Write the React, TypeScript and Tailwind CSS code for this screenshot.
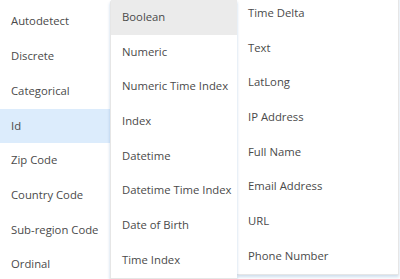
import React from "react";

const col1 = ["Autodetect", "Discrete", "Categorical", "Id", "Zip Code", "Country Code", "Sub-region Code", "Ordinal"];
const col2 = ["Boolean", "Numeric", "Numeric Time Index", "Index", "Datetime", "Datetime Time Index", "Date of Birth", "Time Index"];
const col3 = ["Time Delta", "Text", "LatLong", "IP Address", "Full Name", "Email Address", "URL", "Phone Number"];

function Menu({ items, active, activeClass, className }: {
    items: string[];
    active?: string;
    activeClass?: string;
    className: string;
}) {
    return <div className={`bg-white flex flex-col ${className}`}>
        {items.map(item => <div
            key={item}
            className={`${item === active ? activeClass : ""} h-[34.7px] flex items-center pl-[11px] text-[11.3px] text-[#4a4a4a] whitespace-nowrap cursor-pointer`}>
            {item}
        </div>)}
    </div>
}

export default function App() {
    return <div className="w-[400px] h-[279px] overflow-hidden bg-white font-['Open_Sans',sans-serif]">
        <div className="flex items-start">
            <Menu items={col1} active="Id" activeClass="bg-[#dcecfc]"
                className="w-[110px] pt-[4.6px] rounded-tl-[3px]" />
            <Menu items={col2} active="Boolean" activeClass="bg-[#ebebeb]"
                className="w-[127px] rounded-tl-[3px] border-l border-b border-[#e6e6e6] shadow-[0_2px_3px_rgba(0,80,160,0.25)] relative z-10" />
            <Menu items={col3}
                className="w-[162px] -mt-[6px] border-t-2 border-t-[#c8dcf0] border-r border-b border-[#e6e6e6] shadow-[0_2px_3px_rgba(0,80,160,0.2)]" />
        </div>
    </div>
}
